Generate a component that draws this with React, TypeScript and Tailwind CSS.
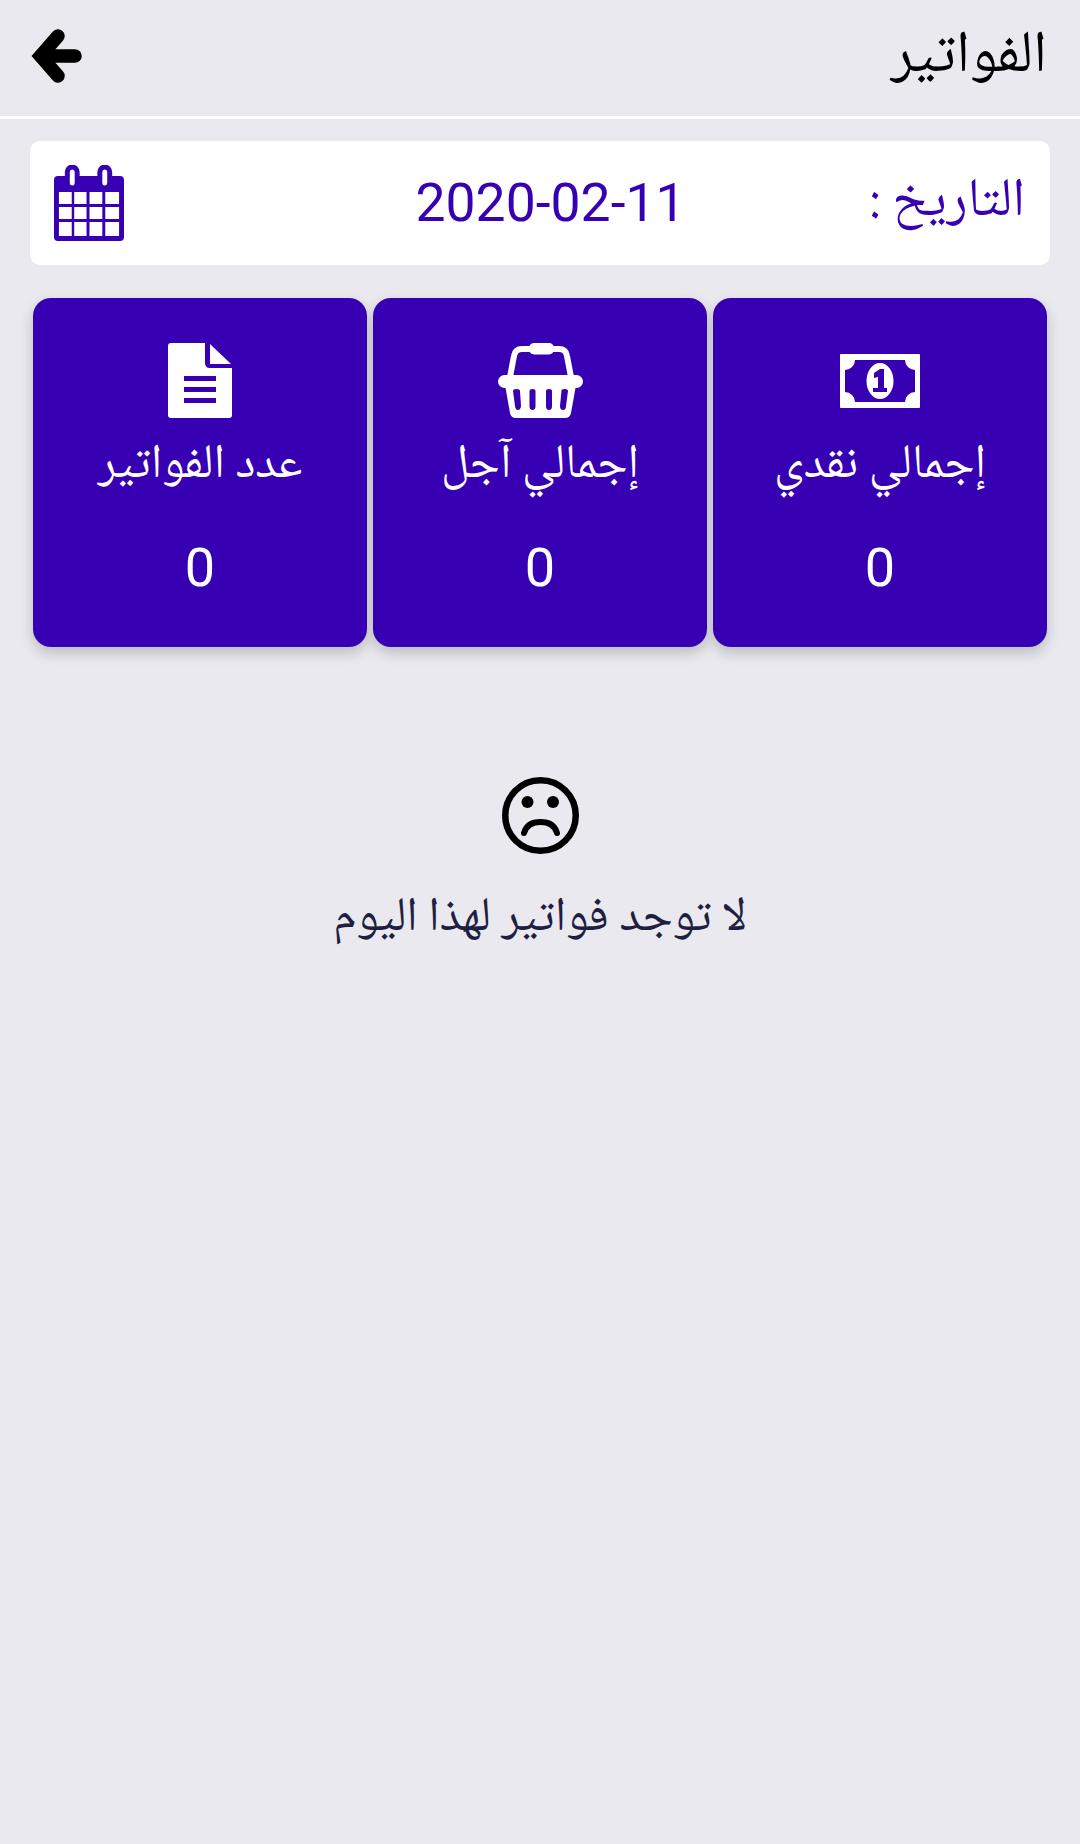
const Arrow = () => (
  <svg width="52" height="56" viewBox="0 0 52 56" fill="none" stroke="black" strokeWidth="13.500" strokeLinecap="round" strokeLinejoin="miter" className="mb-[5px]">
    <path d="M27 8L9.500 28L27 48" strokeLinecap="round" />
    <path d="M10 28H44" />
  </svg>
);

const Calendar = () => (
  <svg width="70" height="76" viewBox="0 0 71 76" preserveAspectRatio="none" fill="#3700b3">
    <path fillRule="evenodd" d="M4 11H11V7a7 7 0 0 1 15 0V11H44V7a7 7 0 0 1 15 0V11H67a4 4 0 0 1 4 4V72a4 4 0 0 1-4 4H4a4 4 0 0 1-4-4V15a4 4 0 0 1 4-4ZM16 7V18a2.500 2.500 0 0 0 5 0V7a2.500 2.500 0 0 0-5 0ZM49 7V18a2.500 2.500 0 0 0 5 0V7a2.500 2.500 0 0 0-5 0ZM5 27V39H18V27ZM20.500 27V39H33V27ZM36 27V39H49V27ZM52 27V39H66V27ZM5 42V54H18V42ZM20.500 42V54H33V42ZM36 42V54H49V42ZM52 42V54H66V42ZM5 57V71H18V57ZM20.500 57V71H33V57ZM36 57V71H49V57ZM52 57V71H66V57Z" />
  </svg>
);

const Money = () => (
  <svg width="80" height="54" viewBox="0 0 80 54" fill="white">
    <path fillRule="evenodd" d="M1 0H79a1 1 0 0 1 1 1V53a1 1 0 0 1-1 1H1a1 1 0 0 1-1-1V1a1 1 0 0 1 1-1ZM15 6A10 10 0 0 1 5 16V38A10 10 0 0 1 15 48H65A10 10 0 0 1 75 38V16A10 10 0 0 1 65 6Z" />
    <ellipse cx="40" cy="27" rx="13.500" ry="18" />
    <path fill="#3700b3" d="M34 19L40 15H44V34H47V38H33V34H38V23L34 24Z" />
  </svg>
);

const Basket = () => (
  <svg width="85" height="75" viewBox="0 0 85 75" fill="white">
    <path fill="none" stroke="white" strokeWidth="6" d="M12 34L16 13Q17 6 24 6H61Q68 6 69 13L73 34" />
    <rect x="31" y="0" width="25" height="11.500" rx="5" />
    <rect x="0" y="32" width="85" height="13" rx="6.500" />
    <path fillRule="evenodd" d="M7 42H78L73 70Q72 75 67 75H18Q13 75 12 70ZM15 48L17 63Q17.500 67 20 67T23 63L22 48Q22 46 18.500 46T15 48ZM31.500 48V63Q31.500 67 34.500 67T37.500 63V48Q37.500 46 34.500 46T31.500 48ZM48 48V63Q48 67 51 67T54 63V48Q54 46 51 46T48 48ZM63.500 48L62 63Q62 67 65 67T68 63L70 48Q70 46 66.500 46T63.500 48Z" />
  </svg>
);

const Doc = () => (
  <svg width="64" height="75" viewBox="0 0 64 75" fill="white">
    <path fillRule="evenodd" d="M3 0H37V20Q37 25 42 25H64V72Q64 75 61 75H3Q0 75 0 72V3Q0 0 3 0ZM16 33V38H48V33ZM16 44V49H48V44ZM16 55V60H48V55Z" />
    <path d="M42 1L63 21H42Z" />
  </svg>
);

const Sad = () => (
  <svg width="77" height="77" viewBox="0 0 77 77" fill="none" stroke="black">
    <circle cx="38.500" cy="38.500" r="35.250" strokeWidth="6.500" />
    <circle cx="25.500" cy="25" r="6" fill="black" stroke="none" />
    <circle cx="51" cy="25" r="6" fill="black" stroke="none" />
    <path d="M22 56Q25 45 38.500 45T55 56" strokeWidth="6" strokeLinecap="round" />
  </svg>
);

const cards = [
  { label: "إجمالي نقدي", icon: <Money />, h: "h-[86px] items-end pb-[10px]" },
  { label: "إجمالي آجل", icon: <Basket />, h: "h-[86px] items-end" },
  { label: "عدد الفواتير", icon: <Doc />, h: "h-[86px] items-end" },
];

export default function App() {
  return (
    <div dir="rtl" className="min-h-[1844px] w-[1080px] bg-[#e9e9ef] font-['Noto_Naskh_Arabic','Noto_Sans',sans-serif]">
      <header className="flex h-[116px] items-center justify-between pl-[31px] pr-[33px]">
        <h1 className="text-[59px] font-normal leading-none text-black">الفواتير</h1>
        <Arrow />
      </header>
      <div className="h-[3px] bg-white" />
      <section className="mx-[30px] mt-[22px] grid h-[124px] grid-cols-3 items-center rounded-[10px] bg-white pl-[24px] pr-[25px] text-[#3700b3]">
        <span className="text-[54px] leading-none">التاريخ :</span>
        <span className="pl-[22px] text-center font-['Roboto',sans-serif] text-[53.500px] leading-none" dir="ltr">2020-02-11</span>
        <div className="flex justify-end"><Calendar /></div>
      </section>
      <section className="mx-[33px] mt-[33px] grid grid-cols-3 gap-[6px]">
        {cards.map((c) => (
          <div key={c.label} className="flex h-[349px] flex-col items-center rounded-[18px] bg-[#3700b3] pt-[34px] text-white shadow-[0_6px_14px_rgba(0,0,0,0.2)]">
            <div className={`flex ${c.h}`}>{c.icon}</div>
            <div className="mt-[14px] text-[48px] leading-[70px]">{c.label}</div>
            <div className="mt-[39px] font-['Roboto',sans-serif] text-[54px] leading-none">0</div>
          </div>
        ))}
      </section>
      <section className="mt-[130px] flex flex-col items-center">
        <Sad />
        <p className="mt-[31px] text-[48px] leading-[70px] text-[#1f2040]">لا توجد فواتير لهذا اليوم</p>
      </section>
    </div>
  );
}
